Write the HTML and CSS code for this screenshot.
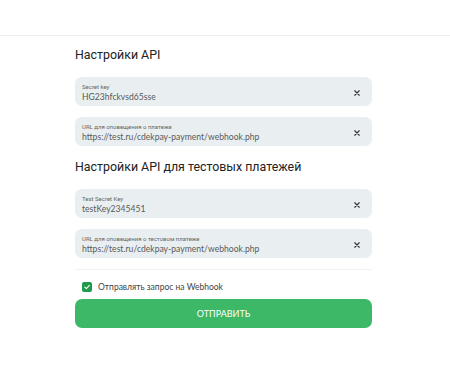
FILE: index.html
```html
<!DOCTYPE html>
<html lang="ru">
<head>
<meta charset="utf-8">
<link rel="stylesheet" href="styles.css">
</head>
<body>
<div class="topbar"></div>
<main class="form">
  <h2 class="title">Настройки API</h2>
  <div class="field">
    <div class="field-text">
      <span class="label">Secret key</span>
      <span class="value">HG23hfckvsd65sse</span>
    </div>
    <svg class="clear" viewBox="0 0 8 8" width="6" height="6"><path d="M1 1L7 7M7 1L1 7" stroke="#333" stroke-width="1.5" stroke-linecap="round"/></svg>
  </div>
  <div class="field">
    <div class="field-text">
      <span class="label">URL для оповещения о платеже</span>
      <span class="value">https://test.ru/cdekpay-payment/webhook.php</span>
    </div>
    <svg class="clear" viewBox="0 0 8 8" width="6" height="6"><path d="M1 1L7 7M7 1L1 7" stroke="#333" stroke-width="1.5" stroke-linecap="round"/></svg>
  </div>
  <h2 class="title title-second">Настройки API для тестовых платежей</h2>
  <div class="field">
    <div class="field-text">
      <span class="label">Test Secret Key</span>
      <span class="value">testKey2345451</span>
    </div>
    <svg class="clear" viewBox="0 0 8 8" width="6" height="6"><path d="M1 1L7 7M7 1L1 7" stroke="#333" stroke-width="1.5" stroke-linecap="round"/></svg>
  </div>
  <div class="field">
    <div class="field-text">
      <span class="label">URL для оповещения о тестовом платеже</span>
      <span class="value">https://test.ru/cdekpay-payment/webhook.php</span>
    </div>
    <svg class="clear" viewBox="0 0 8 8" width="6" height="6"><path d="M1 1L7 7M7 1L1 7" stroke="#333" stroke-width="1.5" stroke-linecap="round"/></svg>
  </div>
  <hr class="divider">
  <label class="check">
    <span class="box"><svg viewBox="0 0 10 10" width="8" height="8"><path d="M2.2 5.2L4.2 7.1L7.9 3" fill="none" stroke="#fff" stroke-width="1.4" stroke-linecap="round" stroke-linejoin="round"/></svg></span>
    <span class="check-text">Отправлять запрос на Webhook</span>
  </label>
  <button class="submit">ОТПРАВИТЬ</button>
</main>
</body>
</html>
```

FILE: styles.css
```css
* { box-sizing: border-box; }
body {
  margin: 0;
  background: #fff;
  font-family: Roboto, "Liberation Sans", Arial, sans-serif;
  color: #222;
}
.topbar {
  height: 36px;
  border-bottom: 1px solid #efefef;
}
.form {
  width: 297px;
  margin-left: 75px;
  padding-top: 10px;
  display: flex;
  flex-direction: column;
}
.title {
  margin: 0;
  font-size: 12.4px;
  line-height: 17px;
  font-weight: 400;
  color: #222;
}
.title-second {
  margin-top: 12px;
}
.field {
  height: 29px;
  margin-top: 11px;
  background: #e9eff0;
  border-radius: 7px;
  padding: 2px 12px 0 7px;
  display: flex;
  align-items: center;
  justify-content: space-between;
}
.title + .field { margin-top: 14px; }
.field-text {
  display: flex;
  flex-direction: column;
}
.label {
  font-size: 6px;
  line-height: 9px;
  color: #666;
}
.value {
  font-family: Lato, Roboto, sans-serif;
  font-size: 8.6px;
  line-height: 12px;
  color: #5a5a5a;
}
.clear { flex: none; }
.divider {
  margin: 11px 0 0;
  border: 0;
  border-top: 1px solid #f2f2f2;
}
.check {
  margin-top: 10px;
  height: 14px;
  display: flex;
  align-items: center;
  gap: 6px;
  padding-left: 7px;
}
.box {
  width: 10px;
  height: 10px;
  border-radius: 2px;
  background: #1f9a4d;
  display: flex;
  align-items: center;
  justify-content: center;
}
.check-text {
  font-family: Lato, Roboto, sans-serif;
  font-size: 8.5px;
  color: #444;
}
.submit {
  margin-top: 5px;
  height: 29px;
  border: 0;
  border-radius: 7px;
  background: #3cb867;
  color: #fff;
  font-family: Lato, Roboto, sans-serif;
  font-size: 9px;
}
```
